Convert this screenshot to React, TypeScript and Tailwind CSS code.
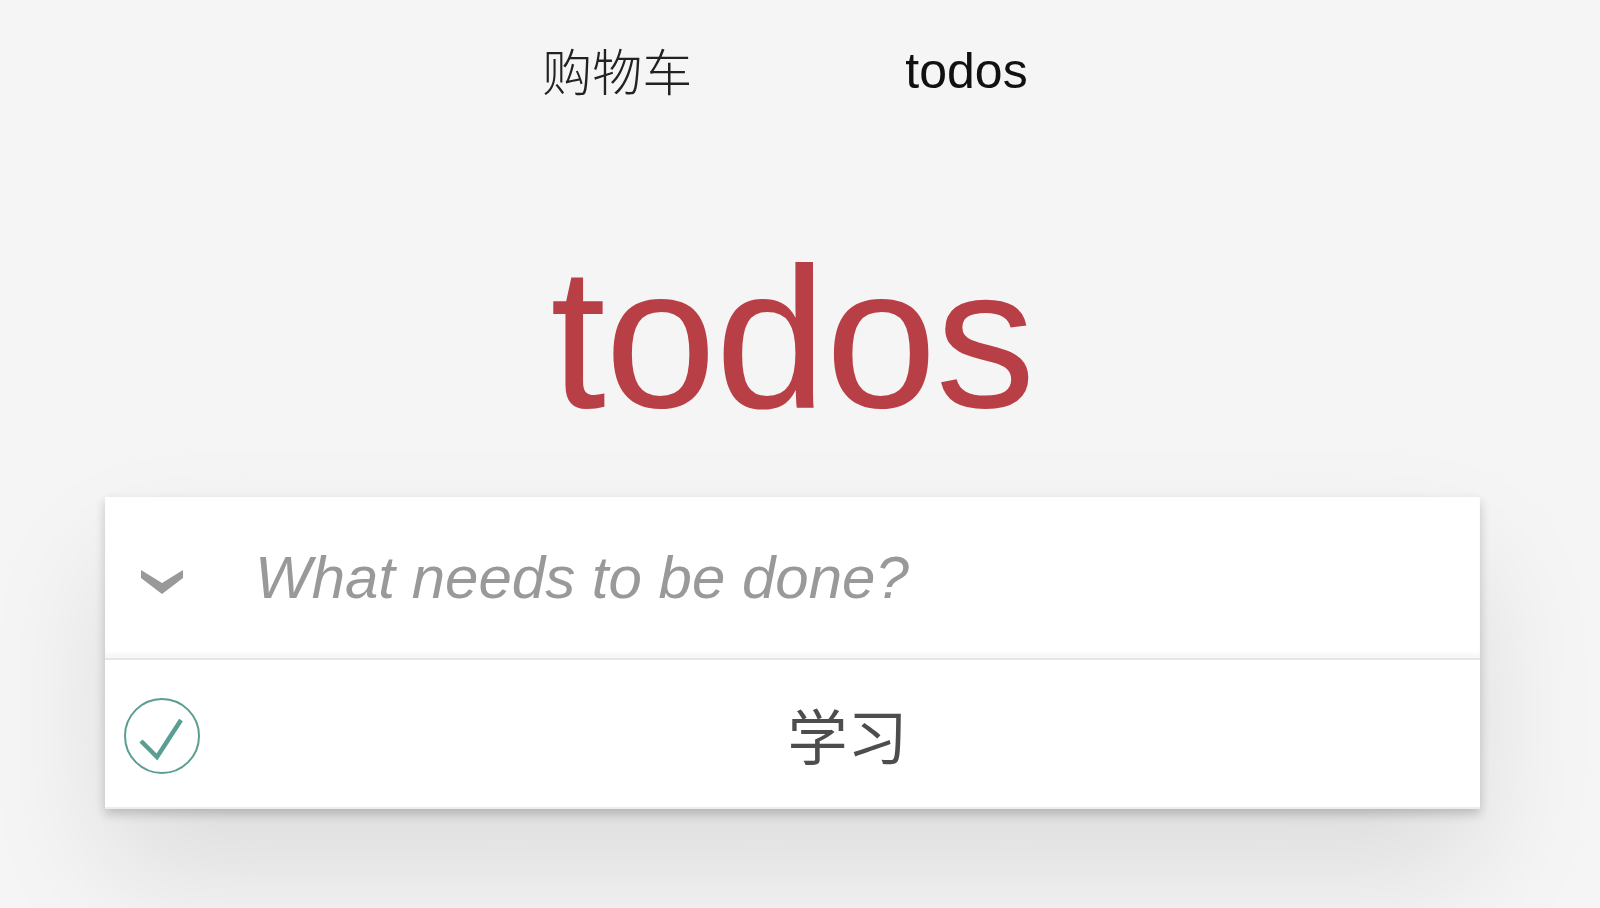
import React from 'react';

const Chevron = () => (
  <svg width="42" height="26" viewBox="0 0 42 26">
    <polygon points="0,1 21,14 42,1 42,9 21,25 0,9" fill="#999999" />
  </svg>
);

const CheckCircle = () => (
  <svg width="80" height="80" viewBox="0 0 80 80">
    <circle cx="40" cy="40" r="37" fill="none" stroke="#5b9e91" strokeWidth="2" />
    <polyline points="19,45 35,61 59,24" fill="none" stroke="#5a9e92" strokeWidth="4.5" />
  </svg>
);

const App = () => {
  return (
    <div className="h-[908px] bg-[#f5f5f5] font-['Liberation_Sans','Noto_Sans_CJK_SC',sans-serif] overflow-hidden">
      <div className="w-[1585px] flex flex-col items-center">
        {/* nav */}
        <nav className="mt-[42px] pr-[15px] flex justify-center gap-[213px] text-[50px] leading-[58px] text-[#111]">
          <a className="font-['Noto_Sans_CJK_SC',sans-serif] font-light text-[#222] leading-[58px] -mt-[2px]">购物车</a>
          <a>todos</a>
        </nav>

        {/* title */}
        <h1 className="mt-[123px] text-[200px] leading-[230px] tracking-[-1px] text-[#b83f45] font-normal">
          todos
        </h1>

        {/* card */}
        <section className="mt-[44px] w-[1375px] bg-white shadow-[0_5px_10px_rgba(0,0,0,0.2),0_62px_125px_rgba(0,0,0,0.1)]">
          <header className="h-[161px] flex items-center shadow-[inset_0_-5px_3px_rgba(0,0,0,0.03)]">
            <div className="w-[150px] pl-[36px] pt-[8px] flex items-center">
              <Chevron />
            </div>
            <input
              className="flex-1 bg-transparent outline-none text-[60px] leading-[84px] italic text-[#4d4d4d] placeholder:text-[#999] pr-[40px]"
              placeholder="What needs to be done?"
            />
          </header>
          <ul className="border-t-2 border-[#e6e6e6]">
            <li className="h-[149px] flex items-center border-b-2 border-[#ededed]">
              <div className="w-[150px] pl-[17px] pt-[4px] flex items-center">
                <CheckCircle />
              </div>
              <label className="flex-1 pr-[40px] text-center text-[60px] leading-[72px] text-[#4d4d4d] font-['Noto_Sans_CJK_SC',sans-serif]">
                学习
              </label>
            </li>
          </ul>
        </section>
      </div>
    </div>
  );
};

export default App;
